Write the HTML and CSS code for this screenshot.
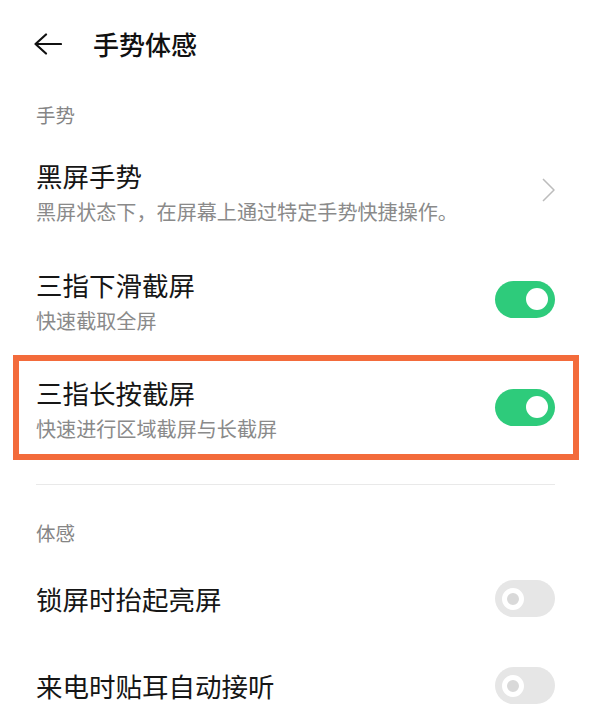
FILE: index.html
```html
<!DOCTYPE html>
<html lang="zh-CN">
<head>
<meta charset="utf-8">
<title>手势体感</title>
<link rel="stylesheet" href="styles.css">
</head>
<body>
<div class="page">
  <header class="header">
    <svg class="back" width="28" height="22" viewBox="0 0 28 22" aria-hidden="true">
      <path d="M1.5 11 H27 M12 1.5 L1.5 11 L12 20.5" fill="none" stroke="#111" stroke-width="2.2" stroke-linecap="round" stroke-linejoin="round"/>
    </svg>
    <h1 class="title">手势体感</h1>
  </header>

  <div class="section-label first">手势</div>

  <div class="row row-a">
    <div class="text">
      <div class="row-title">黑屏手势</div>
      <div class="row-sub">黑屏状态下，在屏幕上通过特定手势快捷操作。</div>
    </div>
    <svg class="chevron" width="13" height="24" viewBox="0 0 13 24" aria-hidden="true">
      <path d="M1 1 L12 12 L1 23" fill="none" stroke="#bcbcbc" stroke-width="1.5" stroke-linejoin="round"/>
    </svg>
  </div>

  <div class="row row-b">
    <div class="text">
      <div class="row-title">三指下滑截屏</div>
      <div class="row-sub">快速截取全屏</div>
    </div>
    <div class="toggle on lifted"><span class="knob"></span></div>
  </div>

  <div class="highlight">
    <div class="row row-c">
      <div class="text">
        <div class="row-title">三指长按截屏</div>
        <div class="row-sub">快速进行区域截屏与长截屏</div>
      </div>
      <div class="toggle on lifted"><span class="knob"></span></div>
    </div>
  </div>

  <div class="divider"></div>

  <div class="section-label second">体感</div>

  <div class="row single">
    <div class="row-title">锁屏时抬起亮屏</div>
    <div class="toggle off"><span class="knob"></span></div>
  </div>

  <div class="row single">
    <div class="row-title">来电时贴耳自动接听</div>
    <div class="toggle off"><span class="knob"></span></div>
  </div>
</div>
</body>
</html>
```

FILE: styles.css
```css
* { box-sizing: border-box; }
html, body { margin: 0; padding: 0; background: #fff; }
body {
  font-family: "Noto Sans CJK SC", "Noto Sans", sans-serif;
  color: #1a1a1a;
  width: 599px;
  height: 726px;
  overflow: hidden;
}
.page { display: flex; flex-direction: column; }

.header {
  height: 88px;
  display: flex;
  align-items: center;
  padding-left: 34px;
}
.back { display: block; flex: none; }
.title {
  margin: 0 0 0 31px;
  font-size: 26px;
  font-weight: 500;
  line-height: 34px;
  color: #111;
}

.section-label {
  height: 52px;
  display: flex;
  align-items: center;
  padding-left: 36px;
  font-size: 19.5px;
  color: #858585;
}
.section-label.second { margin-top: 24px; height: 46px; }

.row {
  display: flex;
  align-items: center;
  justify-content: space-between;
  padding: 0 44px 0 36px;
}
.row-a { padding-top: 19px; padding-bottom: 21px; }
.row-b { padding-top: 20px; padding-bottom: 19px; }
.row-c { padding: 15px 18px 10px 17px; }
.row.single { height: 87px; }

.text { display: flex; flex-direction: column; }
.row-title {
  font-size: 26.5px;
  line-height: 34px;
  color: #161616;
}
.row-sub {
  margin-top: 4px;
  font-size: 20.1px;
  line-height: 30px;
  color: #8a8a8a;
}
.chevron { display: block; flex: none; margin-top: -6px; }

.highlight {
  margin: 0 20px 0 13px;
  border: 6px solid #f36b3b;
}

.divider {
  margin: 24px 44px 0 36px;
  height: 1px;
  background: #e9e9e9;
}

.toggle {
  flex: none;
  width: 60px;
  height: 37px;
  border-radius: 18.5px;
  display: flex;
  align-items: center;
  padding: 0 7px;
}
.toggle.lifted { margin-top: -6px; }
.toggle.on { background: #2ecb7b; justify-content: flex-end; }
.toggle.off { background: #e6e6e6; justify-content: flex-start; }
.knob {
  width: 22px;
  height: 22px;
  border-radius: 50%;
  background: #fff;
}
.toggle.off .knob {
  background: #d9d9d9;
  border: 5px solid #fff;
}
```
